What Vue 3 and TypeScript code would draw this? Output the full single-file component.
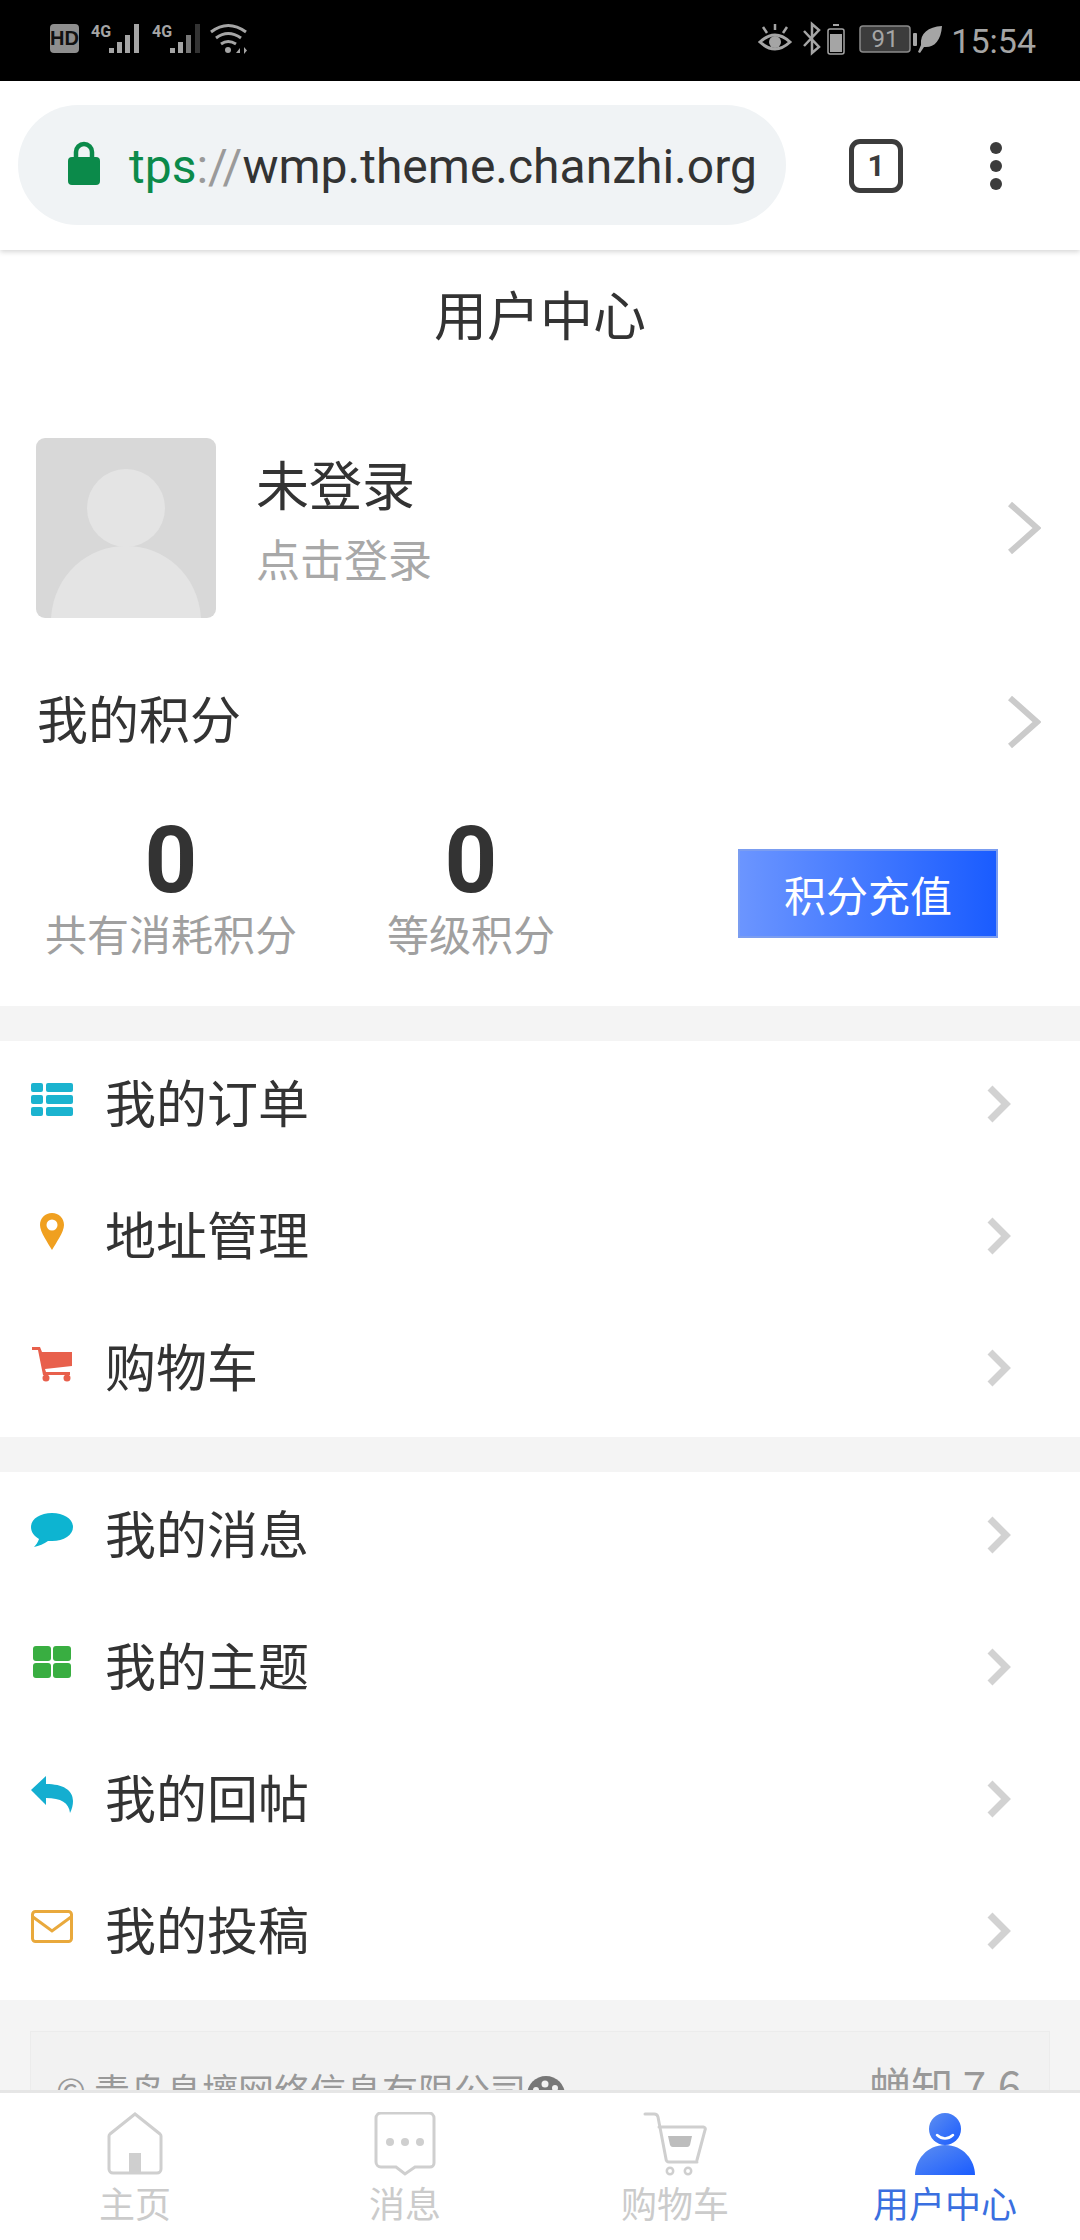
<template>
  <div class="phone">
    <!-- system status bar -->
    <div class="status-bar">
      <svg class="status-left" width="200" height="40" viewBox="0 0 200 40">
        <rect x="0" y="2" width="29" height="29" rx="4" fill="#8e8e8e" />
        <text x="14.5" y="23" class="hd">HD</text>
        <text x="41" y="15" class="net">4G</text>
        <g fill="#a5a5a5">
          <rect x="59" y="26" width="5" height="5" />
          <rect x="67" y="20" width="5" height="11" />
          <rect x="75" y="13" width="5" height="18" />
          <rect x="84" y="2" width="5" height="29" />
        </g>
        <text x="102" y="15" class="net">4G</text>
        <g fill="#a5a5a5">
          <rect x="120" y="26" width="5" height="5" />
          <rect x="128" y="20" width="5" height="11" />
          <rect x="136" y="13" width="5" height="18" fill="#777" />
          <rect x="145" y="2" width="5" height="29" fill="#333" />
        </g>
        <g fill="none" stroke="#a5a5a5" stroke-width="3">
          <path d="M161 10q17-13 35 0" />
          <path d="M166 16q12-9 25 0" />
          <path d="M171 22q7-5 15 0" />
        </g>
        <circle cx="178" cy="28" r="3" fill="#a5a5a5" />
        <path d="M186 31l4-5v5zM194 25v7l3-3.500z" fill="#a5a5a5" />
      </svg>
      <div class="status-right">
        <svg width="160" height="40" viewBox="0 0 160 40">
          <g fill="none" stroke="#a5a5a5" stroke-width="3">
            <path d="M2 21q15-14 30 0q-15 14-30 0z" />
            <path d="M5 6l4 6M17 3v6M29 6l-4 6" stroke-width="2.500" />
          </g>
          <circle cx="17" cy="21" r="6" fill="#a5a5a5" />
          <path d="M46 10l15 16-7 6V3l7 6-15 16" fill="none" stroke="#a5a5a5" stroke-width="2.500" />
          <rect x="70" y="8" width="16" height="25" rx="2" fill="none" stroke="#a5a5a5" stroke-width="1.500" />
          <rect x="72" y="13" width="12" height="18" fill="#a5a5a5" />
          <rect x="75" y="3" width="6" height="2" fill="#a5a5a5" />
          <rect x="102" y="5" width="50" height="26" rx="3" fill="#3c3c3c" stroke="#8a8a8a" stroke-width="1.500" />
          <text x="127" y="26" class="batt">91</text>
          <rect x="155" y="12" width="4" height="13" rx="1" fill="#a5a5a5" />
        </svg>
        <svg width="25" height="40" viewBox="0 0 25 40">
          <path d="M24 5C10 6 2 12 3 24L0 31l2 1 4-6c10 1 17-6 18-21z" fill="#a5a5a5" />
        </svg>
        <span class="clock">15:54</span>
      </div>
    </div>

    <!-- browser toolbar -->
    <div class="toolbar">
      <div class="url-pill">
        <svg class="lock" width="34" height="44" viewBox="0 0 34 44">
          <path d="M9 18v-7a8 8 0 0 1 16 0v7" fill="none" stroke="#0b8a4a" stroke-width="4.500" />
          <rect x="1" y="16" width="32" height="28" rx="4" fill="#0b8a4a" />
        </svg>
        <span class="url"><span class="url-scheme">tps</span><span class="url-sep">://</span>wmp.theme.chanzhi.org</span>
      </div>
      <div class="tab-count">1</div>
      <div class="menu-dots"><i></i><i></i><i></i></div>
    </div>

    <div class="scroll">
      <div class="page-title">用户中心</div>

      <div class="profile">
        <svg class="avatar" width="180" height="180" viewBox="0 0 180 180">
          <rect width="180" height="180" rx="9" fill="#d8d8d8" />
          <circle cx="90" cy="70" r="39" fill="#e4e4e4" />
          <path d="M15 180C18 136 52 108 90 108s72 28 75 72z" fill="#e4e4e4" />
        </svg>
        <div class="profile-text">
          <div class="profile-name">未登录</div>
          <div class="profile-hint">点击登录</div>
        </div>
        <svg class="big-chevron" width="34" height="54" viewBox="0 0 34 54">
          <path d="M3 3l27 24L3 51" fill="none" stroke="#cbcbcb" stroke-width="6" />
        </svg>
      </div>

      <div class="score-head">
        <span class="score-title">我的积分</span>
        <svg class="big-chevron score-chevron" width="34" height="54" viewBox="0 0 34 54">
          <path d="M3 3l27 24L3 51" fill="none" stroke="#cbcbcb" stroke-width="6" />
        </svg>
      </div>

      <div class="score-row">
        <div class="score score-used">
          <div class="score-num">0</div>
          <div class="score-label">共有消耗积分</div>
        </div>
        <div class="score score-level">
          <div class="score-num">0</div>
          <div class="score-label">等级积分</div>
        </div>
        <div class="recharge">积分充值</div>
      </div>

      <div v-for="(group, g) in groups" :key="g" class="menu-group">
        <div v-for="item in group" :key="item.label" class="menu-row">
          <span class="menu-icon">
            <svg width="44" height="40" viewBox="0 0 44 40">
              <template v-if="item.icon === 'list'">
                <g fill="#1bb3cf">
                  <rect x="1" y="3" width="12" height="9" rx="2" />
                  <rect x="16" y="3" width="27" height="9" rx="2" />
                  <rect x="1" y="15" width="12" height="9" rx="2" />
                  <rect x="16" y="15" width="27" height="9" rx="2" />
                  <rect x="1" y="27" width="12" height="9" rx="2" />
                  <rect x="16" y="27" width="27" height="9" rx="2" />
                </g>
              </template>
              <template v-else-if="item.icon === 'pin'">
                <path d="M22 1C15 1 10 6 10 13c0 7 8 18 12 25 4-7 12-18 12-25C34 6 29 1 22 1z" fill="#f0a020" />
                <circle cx="22" cy="13" r="5.500" fill="#fff" />
              </template>
              <template v-else-if="item.icon === 'cart'">
                <path d="M2 3h8l2 5h30v14l-27 3 1 3h24v3H13L8 6H2z" fill="#e8604c" />
                <circle cx="16" cy="34" r="3.500" fill="#e8604c" />
                <circle cx="37" cy="34" r="3.500" fill="#e8604c" />
              </template>
              <template v-else-if="item.icon === 'bubble'">
                <path d="M22 2C10 2 1 8 1 16c0 5 3 9 8 12-1 3-3 6-5 8 5-1 10-3 14-6h4c12 0 21-6 21-14S34 2 22 2z" fill="#0db4d1" />
              </template>
              <template v-else-if="item.icon === 'grid'">
                <g fill="#39ae41">
                  <rect x="3" y="3" width="18" height="15" rx="3" />
                  <rect x="23" y="3" width="18" height="15" rx="3" />
                  <rect x="3" y="20" width="18" height="15" rx="3" />
                  <rect x="23" y="20" width="18" height="15" rx="3" />
                </g>
              </template>
              <template v-else-if="item.icon === 'reply'">
                <path d="M1 15L16 1v8c17 0 27 6 27 17 0 4-1 8-3 12-1-10-9-15-24-15v7z" fill="#14aed0" />
              </template>
              <template v-else>
                <rect x="2.500" y="4.500" width="39" height="30" rx="3" fill="none" stroke="#e9a93c" stroke-width="3" />
                <path d="M3 10l19 14 19-14" fill="none" stroke="#e9a93c" stroke-width="3" />
              </template>
            </svg>
          </span>
          <span class="menu-label">{{ item.label }}</span>
          <svg class="row-chevron" width="26" height="40" viewBox="0 0 26 40">
            <path d="M4 4l16 16L4 36" fill="none" stroke="#d2d2d2" stroke-width="7" />
          </svg>
        </div>
      </div>

      <div class="footer-wrap">
        <div class="footer-box">
          <span class="copyright">© 青岛息壤网络信息有限公司
            <svg class="palette" width="40" height="36" viewBox="0 0 40 36">
              <circle cx="20" cy="20" r="19" fill="#777" />
              <circle cx="10" cy="15" r="3" fill="#f2f2f2" />
              <circle cx="19" cy="9" r="3.500" fill="#f2f2f2" />
              <circle cx="29" cy="13" r="3" fill="#f2f2f2" />
            </svg>
          </span>
          <span class="version">蝉知 7.6</span>
        </div>
      </div>
    </div>

    <!-- bottom tab bar -->
    <div class="tabbar">
      <div v-for="tab in tabs" :key="tab.label" class="tab" :class="{ active: tab.active }">
        <svg width="64" height="64" viewBox="0 0 64 64">
          <template v-if="tab.icon === 'home'">
            <path d="M32 2L7 22a3 3 0 0 0-1 2v33a4 4 0 0 0 4 4h44a4 4 0 0 0 4-4V24a3 3 0 0 0-1-2z" fill="none" stroke="#cfcfcf" stroke-width="3" />
            <rect x="26" y="41" width="12" height="19" fill="#cfcfcf" />
          </template>
          <template v-else-if="tab.icon === 'msg'">
            <path d="M8 2h48a5 5 0 0 1 5 5v45a4 4 0 0 1-4 4H42l-10 7-9-7H8a5 5 0 0 1-5-5V7a5 5 0 0 1 5-5z" fill="none" stroke="#cfcfcf" stroke-width="3" transform="translate(0 -1)" />
            <circle cx="17" cy="30" r="4" fill="#cfcfcf" />
            <circle cx="32" cy="30" r="4" fill="#cfcfcf" />
            <circle cx="47" cy="30" r="4" fill="#cfcfcf" />
          </template>
          <template v-else-if="tab.icon === 'cart'">
            <path d="M2 2h9a4 4 0 0 1 4 3l8 42a3 3 0 0 0 3 3h28M16 15h44a2 2 0 0 1 2 3l-8 30" fill="none" stroke="#cfcfcf" stroke-width="3" stroke-linecap="round" />
            <path d="M25 24h24l-2 9a3 3 0 0 1-3 2H30a3 3 0 0 1-3-2z" fill="#bdbdbd" />
            <circle cx="27" cy="59" r="3.200" fill="none" stroke="#cfcfcf" stroke-width="2.500" />
            <circle cx="45" cy="59" r="3.200" fill="none" stroke="#cfcfcf" stroke-width="2.500" />
          </template>
          <template v-else>
            <defs>
              <linearGradient id="userFill" x1="0" y1="0" x2="1" y2="1">
                <stop offset="0" stop-color="#5d8ef0" />
                <stop offset="1" stop-color="#1a5cff" />
              </linearGradient>
            </defs>
            <circle cx="32" cy="17" r="16" fill="url(#userFill)" />
            <path d="M24 23q8 7 16 0" fill="none" stroke="#fff" stroke-width="2.500" stroke-linecap="round" />
            <path d="M2 63c0-15 12-30 30-30s30 15 30 30z" fill="url(#userFill)" />
          </template>
        </svg>
        <span class="tab-label">{{ tab.label }}</span>
      </div>
    </div>
  </div>
</template>

<script setup lang="ts">
interface MenuItem {
  label: string
  icon: string
}

interface Tab {
  label: string
  icon: string
  active?: boolean
}

const groups: MenuItem[][] = [
  [
    { label: '我的订单', icon: 'list' },
    { label: '地址管理', icon: 'pin' },
    { label: '购物车', icon: 'cart' }
  ],
  [
    { label: '我的消息', icon: 'bubble' },
    { label: '我的主题', icon: 'grid' },
    { label: '我的回帖', icon: 'reply' },
    { label: '我的投稿', icon: 'mail' }
  ]
]

const tabs: Tab[] = [
  { label: '主页', icon: 'home' },
  { label: '消息', icon: 'msg' },
  { label: '购物车', icon: 'cart' },
  { label: '用户中心', icon: 'user', active: true }
]
</script>

<style>
body {
  background: #fff;
}
</style>

<style scoped>
.phone {
  width: 1080px;
  height: 2240px;
  display: flex;
  flex-direction: column;
  overflow: hidden;
  font-family: "Noto Sans CJK SC", "Noto Sans", sans-serif;
  color: #333;
  background: #fff;
}

.status-bar {
  flex: none;
  height: 81px;
  background: #000;
  display: flex;
  align-items: center;
  justify-content: space-between;
  padding: 0 44px 0 50px;
  box-sizing: border-box;
}

.status-left {
  margin-top: 2px;
}

.status-right {
  display: flex;
  align-items: center;
}

.hd {
  font: 700 20px "Liberation Sans", sans-serif;
  fill: #111;
  text-anchor: middle;
}

.net {
  font: 700 16px "Roboto", sans-serif;
  fill: #a5a5a5;
}

.batt {
  font: 400 24px "Roboto", sans-serif;
  fill: #a5a5a5;
  text-anchor: middle;
}

.clock {
  font: 400 34px "Roboto", sans-serif;
  color: #a5a5a5;
  margin-left: 8px;
}

.toolbar {
  flex: none;
  height: 169px;
  display: flex;
  align-items: center;
  padding-left: 18px;
  box-sizing: border-box;
  background: #fff;
  box-shadow: 0 2px 5px rgba(0, 0, 0, 0.16);
  position: relative;
}

.url-pill {
  width: 768px;
  height: 120px;
  margin-top: -2px;
  border-radius: 60px;
  background: #f0f3f5;
  display: flex;
  align-items: center;
  padding-left: 49px;
  box-sizing: border-box;
}

.lock {
  margin-bottom: 4px;
}

.url {
  font: 400 48px "Roboto", sans-serif;
  color: #333;
  margin-left: 28px;
  margin-top: 3px;
  white-space: nowrap;
}

.url-scheme {
  color: #0b8a4a;
}

.url-sep {
  color: #9a9a9a;
}

.tab-count {
  width: 54px;
  height: 54px;
  margin-left: 63px;
  border: 5px solid #3c3c3c;
  border-radius: 11px;
  box-sizing: border-box;
  display: flex;
  align-items: center;
  justify-content: center;
  font: 700 30px "Roboto", sans-serif;
  color: #3c3c3c;
}

.menu-dots {
  margin-left: 87px;
  display: flex;
  flex-direction: column;
  gap: 6px;
}

.menu-dots i {
  display: block;
  width: 12px;
  height: 12px;
  border-radius: 50%;
  background: #3c3c3c;
}

.scroll {
  flex: 1;
  min-height: 0;
  overflow: hidden;
}

.page-title {
  height: 136px;
  display: flex;
  align-items: center;
  justify-content: center;
  font-size: 53px;
  padding-bottom: 10px;
  box-sizing: border-box;
}

.profile {
  height: 180px;
  margin-top: 52px;
  display: flex;
  align-items: center;
  padding: 0 39px 0 36px;
}

.avatar {
  flex: none;
}

.profile-text {
  flex: 1;
  margin: 0 0 21px 40px;
}

.profile-name {
  font-size: 53px;
  line-height: 74px;
}

.profile-hint {
  font-size: 44px;
  line-height: 62px;
  color: #a8a8a8;
  margin-top: 7px;
}

.score-head {
  height: 78px;
  margin-top: 63px;
  display: flex;
  align-items: center;
  justify-content: space-between;
  padding: 0 39px 0 37px;
  font-size: 51px;
}

.score-title {
  margin-bottom: 6px;
}

.score-chevron {
  margin-top: 4px;
}

.score-row {
  height: 247px;
  display: flex;
  align-items: flex-start;
}

.score {
  text-align: center;
  width: 280px;
  margin-top: 59px;
}

.score-used {
  margin-left: 31px;
}

.score-level {
  margin-left: 20px;
}

.score-num {
  font: 700 92px/86px "Roboto", sans-serif;
}

.score-label {
  font-size: 42px;
  line-height: 60px;
  margin-top: -1px;
  color: #a0a0a0;
}

.recharge {
  width: 260px;
  height: 89px;
  margin: 90px 82px 0 auto;
  border: 2px solid #7b9df0;
  box-sizing: border-box;
  background: linear-gradient(90deg, #6b95ff, #1a5cff);
  color: #fff;
  font-size: 42px;
  display: flex;
  align-items: center;
  justify-content: center;
}

.menu-group {
  border-top: 35px solid #f4f4f4;
  background: #fff;
}

.menu-row {
  height: 132px;
  display: flex;
  align-items: center;
  padding: 0 68px 14px 30px;
  box-sizing: border-box;
}

.menu-icon {
  width: 44px;
  height: 40px;
  flex: none;
}

.menu-icon svg {
  display: block;
}

.menu-label {
  flex: 1;
  margin: 2px 0 0 31px;
  font-size: 51px;
}

.row-chevron {
  flex: none;
  margin-top: 8px;
}

.footer-wrap {
  background: #f4f4f4;
  padding: 31px 30px 0;
  height: 200px;
  box-sizing: border-box;
}

.footer-box {
  height: 200px;
  background: #f2f2f2;
  border: 1px solid #ececec;
  box-sizing: border-box;
  display: flex;
  justify-content: space-between;
  padding: 31px 28px 0 25px;
  color: #999;
}

.copyright {
  font-size: 36px;
  line-height: 52px;
}

.palette {
  vertical-align: -6px;
  margin-left: -8px;
}

.version {
  font-size: 42px;
  line-height: 52px;
  margin-top: -4px;
}

.tabbar {
  flex: none;
  height: 150px;
  display: grid;
  grid-template-columns: repeat(4, 270px);
  border-top: 3px solid #e6e6e6;
  box-sizing: border-box;
  background: #fff;
}

.tab {
  display: flex;
  flex-direction: column;
  align-items: center;
  padding-top: 19px;
}

.tab svg {
  display: block;
}

.tab-label {
  font-size: 36px;
  line-height: 50px;
  color: #cbcbcb;
  margin-top: 1px;
}

.tab.active .tab-label {
  color: #3a6fe0;
}
</style>
